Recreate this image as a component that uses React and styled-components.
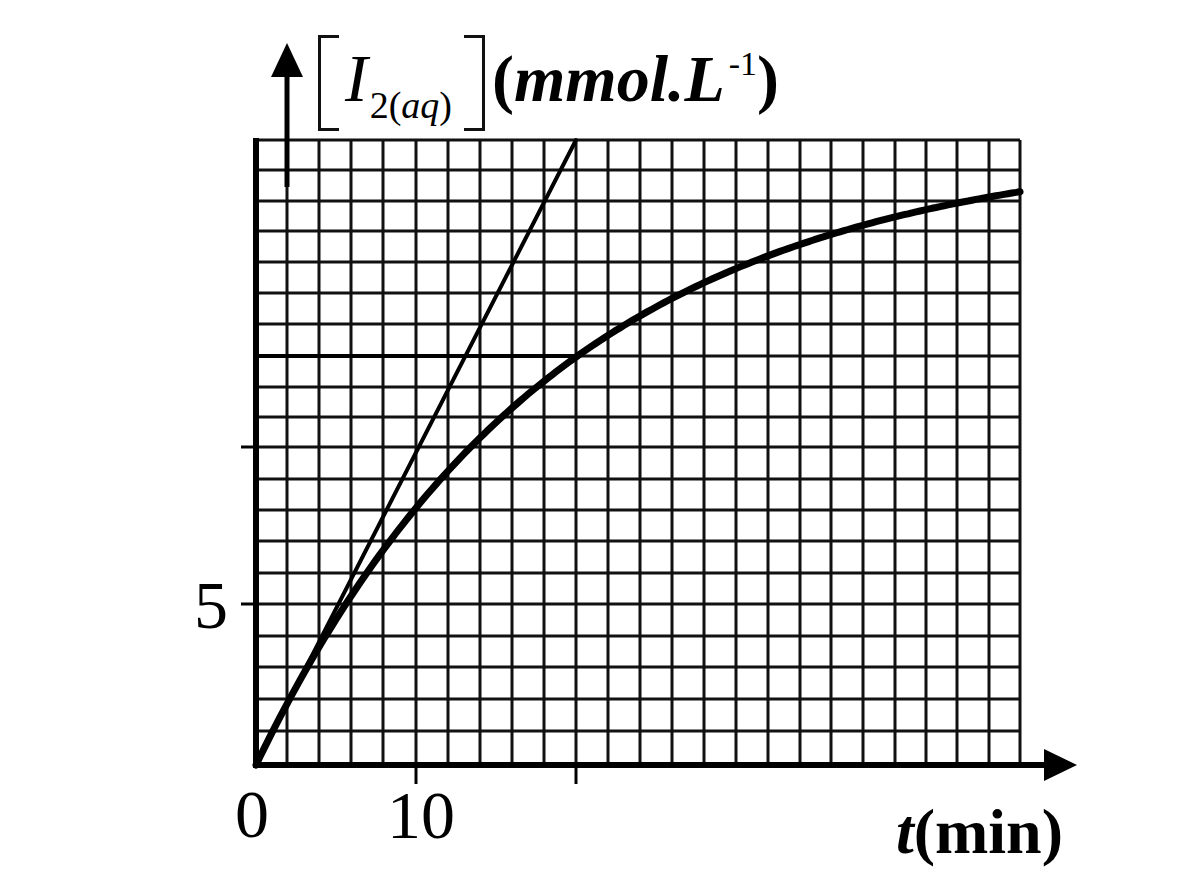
import React from 'react';
import styled, { createGlobalStyle } from 'styled-components';

// grid lines as read off the scan (it is slightly uneven)
const cols = [256, 287, 319, 351, 383, 416, 448, 480, 512, 544, 576, 608, 640, 672, 704, 736, 768, 800, 831, 863, 895, 926, 957, 989, 1020];
const rows = [765, 731, 699, 667, 636, 604, 573, 541, 510, 479, 447, 417, 387, 356, 324, 293, 262, 231, 201, 170, 140];

const X0 = cols[0];
const Y0 = rows[0];
const RIGHT = cols[cols.length - 1];
const TOP = rows[rows.length - 1];

const curvePath = () => {
  const pts = [];
  for (let d = 0; d <= RIGHT - X0; d += 4) {
    const h = 622 * (1 - Math.exp(-d / 300));
    pts.push(`${(X0 + d).toFixed(1)},${(Y0 - h).toFixed(1)}`);
  }
  return 'M' + pts.join(' L');
};

const GlobalStyle = createGlobalStyle`
  html, body {
    margin: 0;
    padding: 0;
    background: #fff;
  }
  body {
    font-family: 'Liberation Serif', 'Times New Roman', serif;
    color: #000;
  }
`;

const Page = styled.div`
  width: 1200px;
  height: 896px;
  overflow: hidden;
  background: #fff;
  display: flex;
  flex-direction: column;
`;

const YTitle = styled.div`
  margin-top: 33px;
  height: 100px;
  padding-left: 318px;
  display: flex;
  align-items: center;
  font-family: 'Liberation Serif', 'Times New Roman', serif;
`;

const Bracket = styled.span`
  display: block;
  width: 18px;
  height: 90px;
  border: 3px solid #111;
  border-left: ${(p) => (p.$side === 'right' ? 'none' : '3px solid #111')};
  border-right: ${(p) => (p.$side === 'left' ? 'none' : '3px solid #111')};
  margin: ${(p) => (p.$side === 'left' ? '0 6px 0 0' : '0 7px 0 12px')};
`;

const Species = styled.span`
  display: block;
  line-height: 1;
  font-size: 68px;
  font-style: italic;
  white-space: nowrap;
  margin-top: -10px;

  sub {
    font-size: 38px;
    font-style: normal;
    vertical-align: -17px;
    line-height: 0;
    margin-left: 2px;
  }

  sub i {
    font-style: italic;
  }
`;

const Unit = styled.span`
  display: block;
  font-size: 66px;
  font-weight: bold;
  line-height: 1;
  white-space: nowrap;
  margin-top: -8px;

  i {
    font-style: italic;
  }

  sup {
    font-size: 34px;
    font-weight: normal;
    vertical-align: 26px;
    line-height: 0;
    margin-left: 4px;
  }
`;

const Plot = styled.svg`
  display: block;
  overflow: visible;
  flex: none;
`;

const TickLabel = styled.text`
  font-family: 'Liberation Serif', 'Times New Roman', serif;
  font-size: 68px;
  fill: #000;
`;

const XTitle = styled.div`
  height: 96px;
  display: flex;
  justify-content: flex-end;
  padding-right: 137px;
  font-size: 64px;
  font-weight: bold;
  line-height: 1;

  i {
    font-style: italic;
  }
`;

const Grid = () => (
  <g stroke="#111" strokeWidth="3" fill="none">
    {cols.slice(1).map((x) => (
      <line key={`v${x}`} x1={x} y1={TOP} x2={x} y2={Y0} />
    ))}
    {rows.slice(1).map((y) => (
      <line key={`h${y}`} x1={X0} y1={y} x2={RIGHT} y2={y} />
    ))}
  </g>
);

const Axes = () => (
  <g fill="#000" stroke="#000">
    {/* left border / ordinate */}
    <line x1={X0} y1={TOP - 2} x2={X0} y2={Y0 + 3} strokeWidth="6" />
    {/* abscissa with arrow */}
    <line x1={X0 - 3} y1={Y0} x2={1050} y2={Y0} strokeWidth="6" />
    <polygon points={`1044,749 1077,${Y0} 1044,781`} stroke="none" />
    {/* raised y-axis arrow */}
    <line x1={cols[1]} y1={70} x2={cols[1]} y2={187} strokeWidth="5" />
    <polygon points={`271,77 ${cols[1]},43 303,77`} stroke="none" />
    {/* ticks */}
    <g strokeWidth="3">
      <line x1={cols[5]} y1={Y0} x2={cols[5]} y2={784} />
      <line x1={cols[10]} y1={Y0} x2={cols[10]} y2={784} />
      <line x1={241} y1={rows[5]} x2={X0} y2={rows[5]} />
      <line x1={241} y1={rows[10]} x2={X0} y2={rows[10]} />
    </g>
  </g>
);

const Curves = () => (
  <g stroke="#000" fill="none" strokeLinecap="round">
    <line x1={X0} y1={rows[13]} x2={cols[10]} y2={rows[13]} strokeWidth="4" />
    <line x1={X0} y1={Y0} x2={cols[10]} y2={TOP} strokeWidth="4" />
    <path d={curvePath()} strokeWidth="7" strokeLinejoin="round" />
  </g>
);

const App = () => {
  return (
    <Page>
      <GlobalStyle />
      <YTitle>
        <Bracket $side="left" />
        <Species>
          I
          <sub>
            2(<i>aq</i>)
          </sub>
        </Species>
        <Bracket $side="right" />
        <Unit>
          (<i>mmol.L</i>
          <sup>-1</sup>)
        </Unit>
      </YTitle>
      <Plot width="1200" height="667" viewBox="0 133 1200 667">
        <Grid />
        <Curves />
        <Axes />
        <TickLabel x={211} y={628} textAnchor="middle">5</TickLabel>
        <TickLabel x={252} y={837} textAnchor="middle">0</TickLabel>
        <TickLabel x={421} y={838} textAnchor="middle">10</TickLabel>
      </Plot>
      <XTitle>
        <span>
          <i>t</i>(min)
        </span>
      </XTitle>
    </Page>
  );
};

export default App;
